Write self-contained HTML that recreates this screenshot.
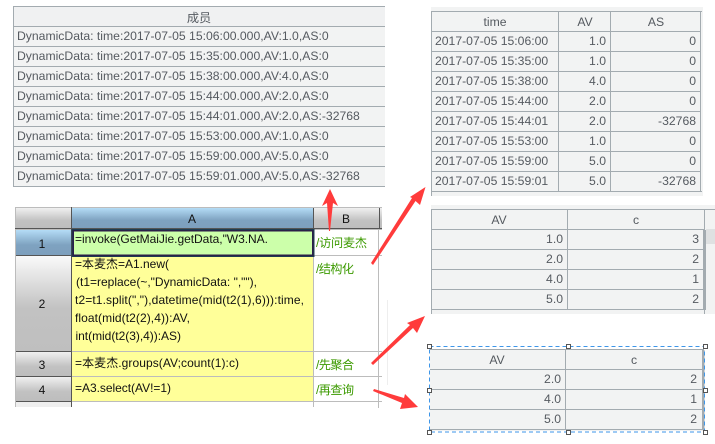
<!DOCTYPE html>
<html><head><meta charset="utf-8">
<style>
html,body{margin:0;padding:0;background:#fff;width:715px;height:444px;overflow:hidden}
svg{position:absolute;left:0;top:0;display:block}
text{font-family:"Liberation Sans","Noto Sans CJK SC",sans-serif}
.t text{font-size:12.2px;fill:#555a60}
.s text{font-size:12px;fill:#111}
.g text{font-size:12.2px;fill:#3c9a00}
.c{text-anchor:middle}.r{text-anchor:end}
.ln{stroke:#a3abb0;stroke-width:1;shape-rendering:crispEdges}
.gl{stroke:#bcbcbc;stroke-width:1;shape-rendering:crispEdges}
</style></head><body>
<svg width="715" height="444" viewBox="0 0 715 444" xmlns="http://www.w3.org/2000/svg">
<defs>
<linearGradient id="gray" x1="0" y1="0" x2="0" y2="1"><stop offset="0" stop-color="#f0f0f0"/><stop offset=".6" stop-color="#c2c2c2"/><stop offset="1" stop-color="#bdbdbd"/></linearGradient>
<linearGradient id="blue" x1="0" y1="0" x2="0" y2="1"><stop offset="0" stop-color="#b4dcf6"/><stop offset=".6" stop-color="#7ea2c0"/><stop offset="1" stop-color="#7d9fbd"/></linearGradient>
<linearGradient id="gray2" x1="0" y1="0" x2="0" y2="1"><stop offset="0" stop-color="#fafafa"/><stop offset=".55" stop-color="#c2c2c2"/><stop offset="1" stop-color="#bfbfbf"/></linearGradient>
</defs>

<!-- table 1 -->
<g class="t">
<rect x="13" y="6" width="372" height="180" fill="#f2f3f3"/>
<rect x="14" y="7" width="371" height="19" fill="#f0f1f2"/>
<path class="ln" d="M13.5 6V186.5M13 6.5H385M13 26.5H385M13 46.5H385M13 66.5H385M13 86.5H385M13 106.5H385M13 126.5H385M13 146.5H385M13 166.5H385M13 186.5H385" fill="none"/>
<text x="199" y="22" class="c">成员</text>
<text x="17" y="40">DynamicData: time:2017-07-05 15:06:00.000,AV:1.0,AS:0</text>
<text x="17" y="60">DynamicData: time:2017-07-05 15:35:00.000,AV:1.0,AS:0</text>
<text x="17" y="80">DynamicData: time:2017-07-05 15:38:00.000,AV:4.0,AS:0</text>
<text x="17" y="100">DynamicData: time:2017-07-05 15:44:00.000,AV:2.0,AS:0</text>
<text x="17" y="120">DynamicData: time:2017-07-05 15:44:01.000,AV:2.0,AS:-32768</text>
<text x="17" y="140">DynamicData: time:2017-07-05 15:53:00.000,AV:1.0,AS:0</text>
<text x="17" y="160">DynamicData: time:2017-07-05 15:59:00.000,AV:5.0,AS:0</text>
<text x="17" y="180">DynamicData: time:2017-07-05 15:59:01.000,AV:5.0,AS:-32768</text>
</g>

<!-- table 2 -->
<g class="t">
<rect x="431" y="7" width="272" height="4" fill="#f2f3f3"/>
<rect x="431" y="11" width="272" height="185" fill="#f2f3f3"/>
<path class="ln" d="M431.5 11V196M558.5 11V191M610.5 11V191M700.5 11V191M431 11.5H702M431 31.5H701M431 51.5H701M431 71.5H701M431 91.5H701M431 111.5H701M431 131.5H701M431 151.5H701M431 171.5H701M431 191.5H702" fill="none"/>
<text x="495" y="26" class="c">time</text><text x="585" y="26" class="c">AV</text><text x="656" y="26" class="c">AS</text>
<text x="435" y="45">2017-07-05 15:06:00</text><text x="606" y="45" class="r">1.0</text><text x="696" y="45" class="r">0</text>
<text x="435" y="65">2017-07-05 15:35:00</text><text x="606" y="65" class="r">1.0</text><text x="696" y="65" class="r">0</text>
<text x="435" y="85">2017-07-05 15:38:00</text><text x="606" y="85" class="r">4.0</text><text x="696" y="85" class="r">0</text>
<text x="435" y="105">2017-07-05 15:44:00</text><text x="606" y="105" class="r">2.0</text><text x="696" y="105" class="r">0</text>
<text x="435" y="125">2017-07-05 15:44:01</text><text x="606" y="125" class="r">2.0</text><text x="696" y="125" class="r">-32768</text>
<text x="435" y="145">2017-07-05 15:53:00</text><text x="606" y="145" class="r">1.0</text><text x="696" y="145" class="r">0</text>
<text x="435" y="165">2017-07-05 15:59:00</text><text x="606" y="165" class="r">5.0</text><text x="696" y="165" class="r">0</text>
<text x="435" y="185">2017-07-05 15:59:01</text><text x="606" y="185" class="r">5.0</text><text x="696" y="185" class="r">-32768</text>
</g>

<!-- table 3 -->
<g class="t">
<rect x="431" y="205" width="284" height="109" fill="#f2f3f3"/>
<path class="ln" d="M431.5 209V314M567.5 209V309M704.5 209V314M431 209.5H715M431 229.5H704M431 249.5H704M431 269.5H704M431 289.5H704M431 309.5H704" fill="none"/>
<rect x="703" y="230" width="3" height="80" fill="#a3abb0"/>
<rect x="706" y="229" width="9" height="15" fill="#dfe1e2"/>
<text x="499" y="224" class="c">AV</text><text x="636" y="224" class="c">c</text>
<text x="563" y="243" class="r">1.0</text><text x="699" y="243" class="r">3</text>
<text x="563" y="263" class="r">2.0</text><text x="699" y="263" class="r">2</text>
<text x="563" y="283" class="r">4.0</text><text x="699" y="283" class="r">1</text>
<text x="563" y="303" class="r">5.0</text><text x="699" y="303" class="r">2</text>
</g>

<!-- table 4 -->
<g class="t">
<rect x="430" y="349" width="274" height="82" fill="#f2f3f3"/>
<path class="ln" d="M430 349.5H704M430 369.5H703M430 389.5H703M430 409.5H703M430 429.5H703M565.5 349V430" fill="none"/>
<rect x="702" y="350" width="2.5" height="80" fill="#a3abb0"/>
<text x="497" y="364" class="c">AV</text><text x="634" y="364" class="c">c</text>
<text x="561" y="383" class="r">2.0</text><text x="697" y="383" class="r">2</text>
<text x="561" y="403" class="r">4.0</text><text x="697" y="403" class="r">1</text>
<text x="561" y="423" class="r">5.0</text><text x="697" y="423" class="r">2</text>
<rect x="429.5" y="346.5" width="275" height="85.5" fill="none" stroke="#3e96e8" stroke-width="1" stroke-dasharray="4 3" shape-rendering="crispEdges"/>
<g fill="#fff" stroke="#555" stroke-width="1" shape-rendering="crispEdges">
<rect x="427.5" y="344.5" width="4" height="4"/><rect x="566.5" y="344.5" width="4" height="4"/><rect x="703.5" y="344.5" width="4" height="4"/>
<rect x="427.5" y="388.5" width="4" height="4"/><rect x="703.5" y="388.5" width="4" height="4"/>
<rect x="427.5" y="430.5" width="4" height="4"/><rect x="566.5" y="430.5" width="4" height="4"/><rect x="703.5" y="430.5" width="4" height="4"/>
</g>
</g>

<!-- sheet -->
<path d="M387.5 300V385" stroke="#eeeeee" fill="none"/>
<g class="s">
<rect x="16" y="208" width="55" height="20.5" fill="url(#gray)"/>
<rect x="72" y="208" width="241" height="20.5" fill="url(#blue)"/>
<rect x="314" y="208" width="65" height="20.5" fill="url(#gray)"/>
<rect x="380" y="208" width="2" height="20.5" fill="url(#gray)"/>
<rect x="16" y="230" width="55" height="25" fill="url(#blue)"/>
<rect x="16" y="256" width="55" height="95" fill="url(#gray2)"/>
<rect x="16" y="352" width="55" height="24" fill="url(#gray)"/>
<rect x="16" y="377" width="55" height="24" fill="url(#gray)"/>
<rect x="16" y="402" width="55" height="5" fill="#efefef"/>
<rect x="72" y="229" width="241" height="27" fill="#ccffaa"/>
<rect x="72" y="256" width="241" height="95" fill="#ffff99"/>
<rect x="72" y="352" width="241" height="24" fill="#ffff99"/>
<rect x="72" y="377" width="241" height="24" fill="#ffff99"/>
<path class="gl" fill="none" d="M15 207.5H382M15.5 207V407M15 229.5H71M71 229.5H382M71 255.5H382M313.5 229V407M378.5 229V408M313 351.5H382M313 376.5H382M313 401.5H382M72 351.5H313M72 376.5H313M72 401.5H313"/>
<path fill="none" stroke="#555" shape-rendering="crispEdges" d="M71.5 207V407M15 228.5H382M313.5 208V229M379.5 208V229M16 255.5H71M16 351.5H71M16 376.5H71M16 401.5H71"/>
<rect x="73" y="230.5" width="240" height="25" fill="none" stroke="#2a1f48" stroke-width="2" shape-rendering="crispEdges"/>
<rect x="72" y="229.5" width="242" height="27" fill="none" stroke="#1d3c50" stroke-width="1" shape-rendering="crispEdges"/>
<text x="192" y="223" class="c">A</text><text x="346" y="223" class="c">B</text>
<text x="42" y="248" class="c">1</text><text x="42" y="308" class="c">2</text><text x="42" y="369" class="c">3</text><text x="42" y="394" class="c">4</text>
<text x="75" y="243" textLength="193" lengthAdjust="spacing">=invoke(GetMaiJie.getData,"W3.NA.</text>
<text x="75" y="268" textLength="94" lengthAdjust="spacing">=本麦杰=A1.new(</text>
<text x="76" y="286" textLength="181" lengthAdjust="spacing">(t1=replace(~,"DynamicData: ",""),</text>
<text x="75" y="304" textLength="229" lengthAdjust="spacing">t2=t1.split(","),datetime(mid(t2(1),6))):time,</text>
<text x="75" y="322" textLength="115" lengthAdjust="spacing">float(mid(t2(2),4)):AV,</text>
<text x="75.5" y="340" textLength="105.5" lengthAdjust="spacing">int(mid(t2(3),4)):AS)</text>
<text x="75" y="367" textLength="164" lengthAdjust="spacing">=本麦杰.groups(AV;count(1):c)</text>
<text x="75" y="392" textLength="96" lengthAdjust="spacing">=A3.select(AV!=1)</text>
</g>
<g class="s g">
<text x="316" y="247" textLength="51" lengthAdjust="spacing">/访问麦杰</text>
<text x="316" y="273" textLength="38" lengthAdjust="spacing">/结构化</text>
<text x="316" y="369" textLength="38" lengthAdjust="spacing">/先聚合</text>
<text x="316" y="394" textLength="38" lengthAdjust="spacing">/再查询</text>
</g>

<!-- arrows -->
<g fill="#ff3b3b">
<polygon points="330,189 338,206 333,203 330,231 329,231 327,203 322,206"/>
<polygon points="425.5,187 420,205 415.5,201 373,265 371,263 412,198 410,197"/>
<polygon points="425,316 417,333 413,328 373,365 371,363 410,325 407,323"/>
<polygon points="418,407 400,409 402,403 373,391 374,389 404,398 405,394"/>
</g>
</svg>
</body></html>
